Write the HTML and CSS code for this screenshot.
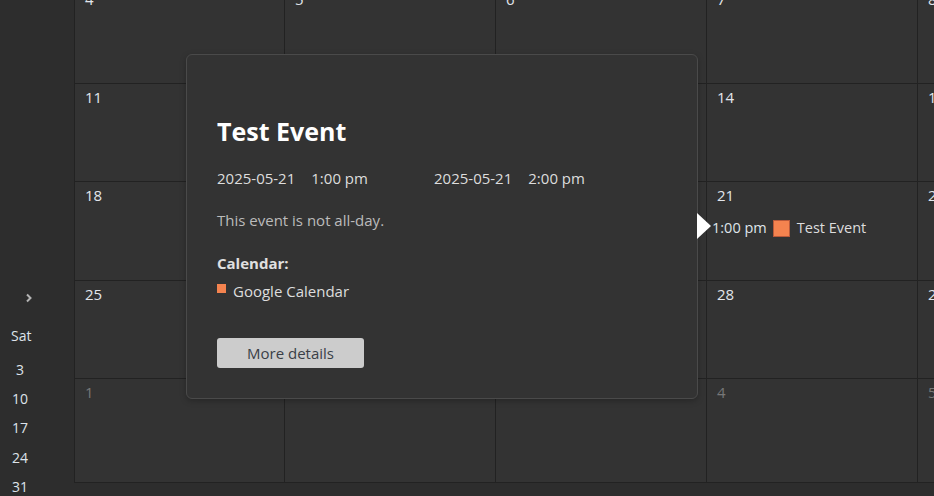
FILE: index.html
```html
<!DOCTYPE html>
<html lang="en">
<head>
<meta charset="utf-8">
<title>Calendar</title>
<link rel="stylesheet" href="styles.css">
</head>
<body>
<div class="app">
  <aside class="sidebar">
    <div class="mini-nav">
      <svg class="chev" width="8" height="10" viewBox="0 0 8 10"><polyline points="2,1.5 5.5,5 2,8.5" fill="none" stroke="#b4b4b4" stroke-width="2"/></svg>
    </div>
    <div class="mini-head">Sat</div>
    <ul class="mini-days">
      <li>3</li>
      <li>10</li>
      <li>17</li>
      <li>24</li>
      <li>31</li>
    </ul>
  </aside>
  <main class="main">
    <div class="grid">
      <div class="cell"><span class="num">4</span></div>
      <div class="cell"><span class="num">5</span></div>
      <div class="cell"><span class="num">6</span></div>
      <div class="cell"><span class="num">7</span></div>
      <div class="cell"><span class="num">8</span></div>
      <div class="cell"><span class="num">9</span></div>
      <div class="cell"><span class="num">10</span></div>

      <div class="cell"><span class="num">11</span></div>
      <div class="cell"><span class="num">12</span></div>
      <div class="cell"><span class="num">13</span></div>
      <div class="cell"><span class="num">14</span></div>
      <div class="cell"><span class="num">15</span></div>
      <div class="cell"><span class="num">16</span></div>
      <div class="cell"><span class="num">17</span></div>

      <div class="cell"><span class="num">18</span></div>
      <div class="cell"><span class="num">19</span></div>
      <div class="cell"><span class="num">20</span></div>
      <div class="cell">
        <span class="num">21</span>
        <div class="event"><span class="ev-time">1:00 pm</span><span class="ev-swatch"></span><span class="ev-title">Test Event</span></div>
      </div>
      <div class="cell"><span class="num">22</span></div>
      <div class="cell"><span class="num">23</span></div>
      <div class="cell"><span class="num">24</span></div>

      <div class="cell"><span class="num">25</span></div>
      <div class="cell"><span class="num">26</span></div>
      <div class="cell"><span class="num">27</span></div>
      <div class="cell"><span class="num">28</span></div>
      <div class="cell"><span class="num">29</span></div>
      <div class="cell"><span class="num">30</span></div>
      <div class="cell"><span class="num">31</span></div>

      <div class="cell last other"><span class="num">1</span></div>
      <div class="cell last other"><span class="num">2</span></div>
      <div class="cell last other"><span class="num">3</span></div>
      <div class="cell last other"><span class="num">4</span></div>
      <div class="cell last other"><span class="num">5</span></div>
      <div class="cell last other"><span class="num">6</span></div>
      <div class="cell last other"><span class="num">7</span></div>
    </div>
  </main>

  <div class="popup">
    <span class="pointer"></span>
    <h1 class="pop-title">Test Event</h1>
    <div class="pop-dates">
      <div class="pop-when"><span>2025-05-21</span><span>1:00 pm</span></div>
      <div class="pop-when"><span>2025-05-21</span><span>2:00 pm</span></div>
    </div>
    <p class="pop-note">This event is not all-day.</p>
    <div class="pop-label">Calendar:</div>
    <div class="pop-cal"><span class="cal-swatch"></span>Google Calendar</div>
    <button class="pop-btn" type="button">More details</button>
  </div>
</div>
</body>
</html>
```

FILE: styles.css
```css
* { box-sizing: border-box; }

html, body {
  margin: 0;
  padding: 0;
  height: 100%;
}

body {
  background: #2d2d2d;
  font-family: "Open Sans", "Noto Sans", sans-serif;
  color: #dddddd;
  overflow: hidden;
}

.app {
  position: relative;
  display: flex;
  height: 496px;
}

/* ---------- sidebar ---------- */
.sidebar {
  width: 74px;
  flex: none;
  background: #2d2d2d;
  padding-top: 293px;
}

.mini-nav {
  height: 10px;
  padding-left: 25px;
}

.chev { display: block; }

.mini-head {
  margin-top: 23px;
  padding-left: 11px;
  font-size: 14px;
  line-height: 20px;
  color: #dde3ea;
}

.mini-days {
  list-style: none;
  margin: 9px 0 0;
  padding: 0 0 0 8px;
  width: 32px;
  font-size: 14px;
  line-height: 29.2px;
  color: #dde3ea;
  text-align: center;
}

/* ---------- month grid ---------- */
.main {
  flex: 1;
  overflow: hidden;
  height: 496px;
}

.grid {
  display: grid;
  grid-template-columns: 210px repeat(6, 211px);
  grid-template-rows: 98px 98px 99px 98px 105px;
  margin-top: -15px;
  background: #333333;
  width: max-content;
}

.cell {
  border-left: 1px solid #222222;
  border-top: 1px solid #222222;
  padding: 3px 5px 0;
  min-width: 0;
}

.cell.last { border-bottom: 1px solid #222222; }

.num {
  display: block;
  padding-left: 5px;
  font-size: 15px;
  line-height: 20px;
  color: #e2e6ec;
}

.other .num { color: #777777; }

.event {
  display: flex;
  align-items: center;
  margin-top: 13px;
  font-size: 14.5px;
  line-height: 20px;
  white-space: nowrap;
}

.ev-time { color: #dfe4ea; }

.ev-swatch {
  width: 17px;
  height: 17px;
  margin: 0 7px 0 6px;
  background: #f4834f;
  border: 1px solid #b8593a;
}

.ev-title { color: #dddddd; }

/* ---------- popup ---------- */
.popup {
  position: absolute;
  left: 186px;
  top: 54px;
  width: 512px;
  height: 345px;
  padding: 59px 30px 0;
  background: #333333;
  border: 1px solid #4a4a4a;
  border-radius: 6px;
  box-shadow: 0 2px 6px rgba(0, 0, 0, 0.25);
}

.pointer {
  position: absolute;
  left: 100%;
  top: 158px;
  width: 0;
  height: 0;
  border-left: 14px solid #ffffff;
  border-top: 13px solid transparent;
  border-bottom: 13px solid transparent;
}

.pop-title {
  margin: 0;
  font-size: 25px;
  line-height: 34px;
  font-weight: 700;
  color: #ffffff;
}

.pop-dates {
  display: flex;
  margin-top: 20px;
  font-size: 15px;
  line-height: 20px;
  color: #dddddd;
}

.pop-when {
  width: 217px;
  display: flex;
  gap: 16px;
}

.pop-note {
  margin: 22px 0 0;
  font-size: 15px;
  line-height: 20px;
  color: #bbbbbb;
}

.pop-label {
  margin-top: 23px;
  font-size: 15px;
  line-height: 20px;
  font-weight: 700;
  color: #e0e0e0;
}

.pop-cal {
  display: flex;
  align-items: flex-start;
  margin-top: 8px;
  font-size: 15px;
  line-height: 20px;
  color: #dddddd;
}

.cal-swatch {
  width: 9px;
  height: 9px;
  margin: 3px 7px 0 0;
  background: #f4834f;
}

.pop-btn {
  display: block;
  margin-top: 37px;
  width: 147px;
  height: 30px;
  padding: 0;
  border: none;
  border-radius: 3px;
  background: #cccccc;
  color: #3a3f47;
  font-family: "Open Sans", "Noto Sans", sans-serif;
  font-size: 15px;
  line-height: 30px;
  text-align: center;
}
```
